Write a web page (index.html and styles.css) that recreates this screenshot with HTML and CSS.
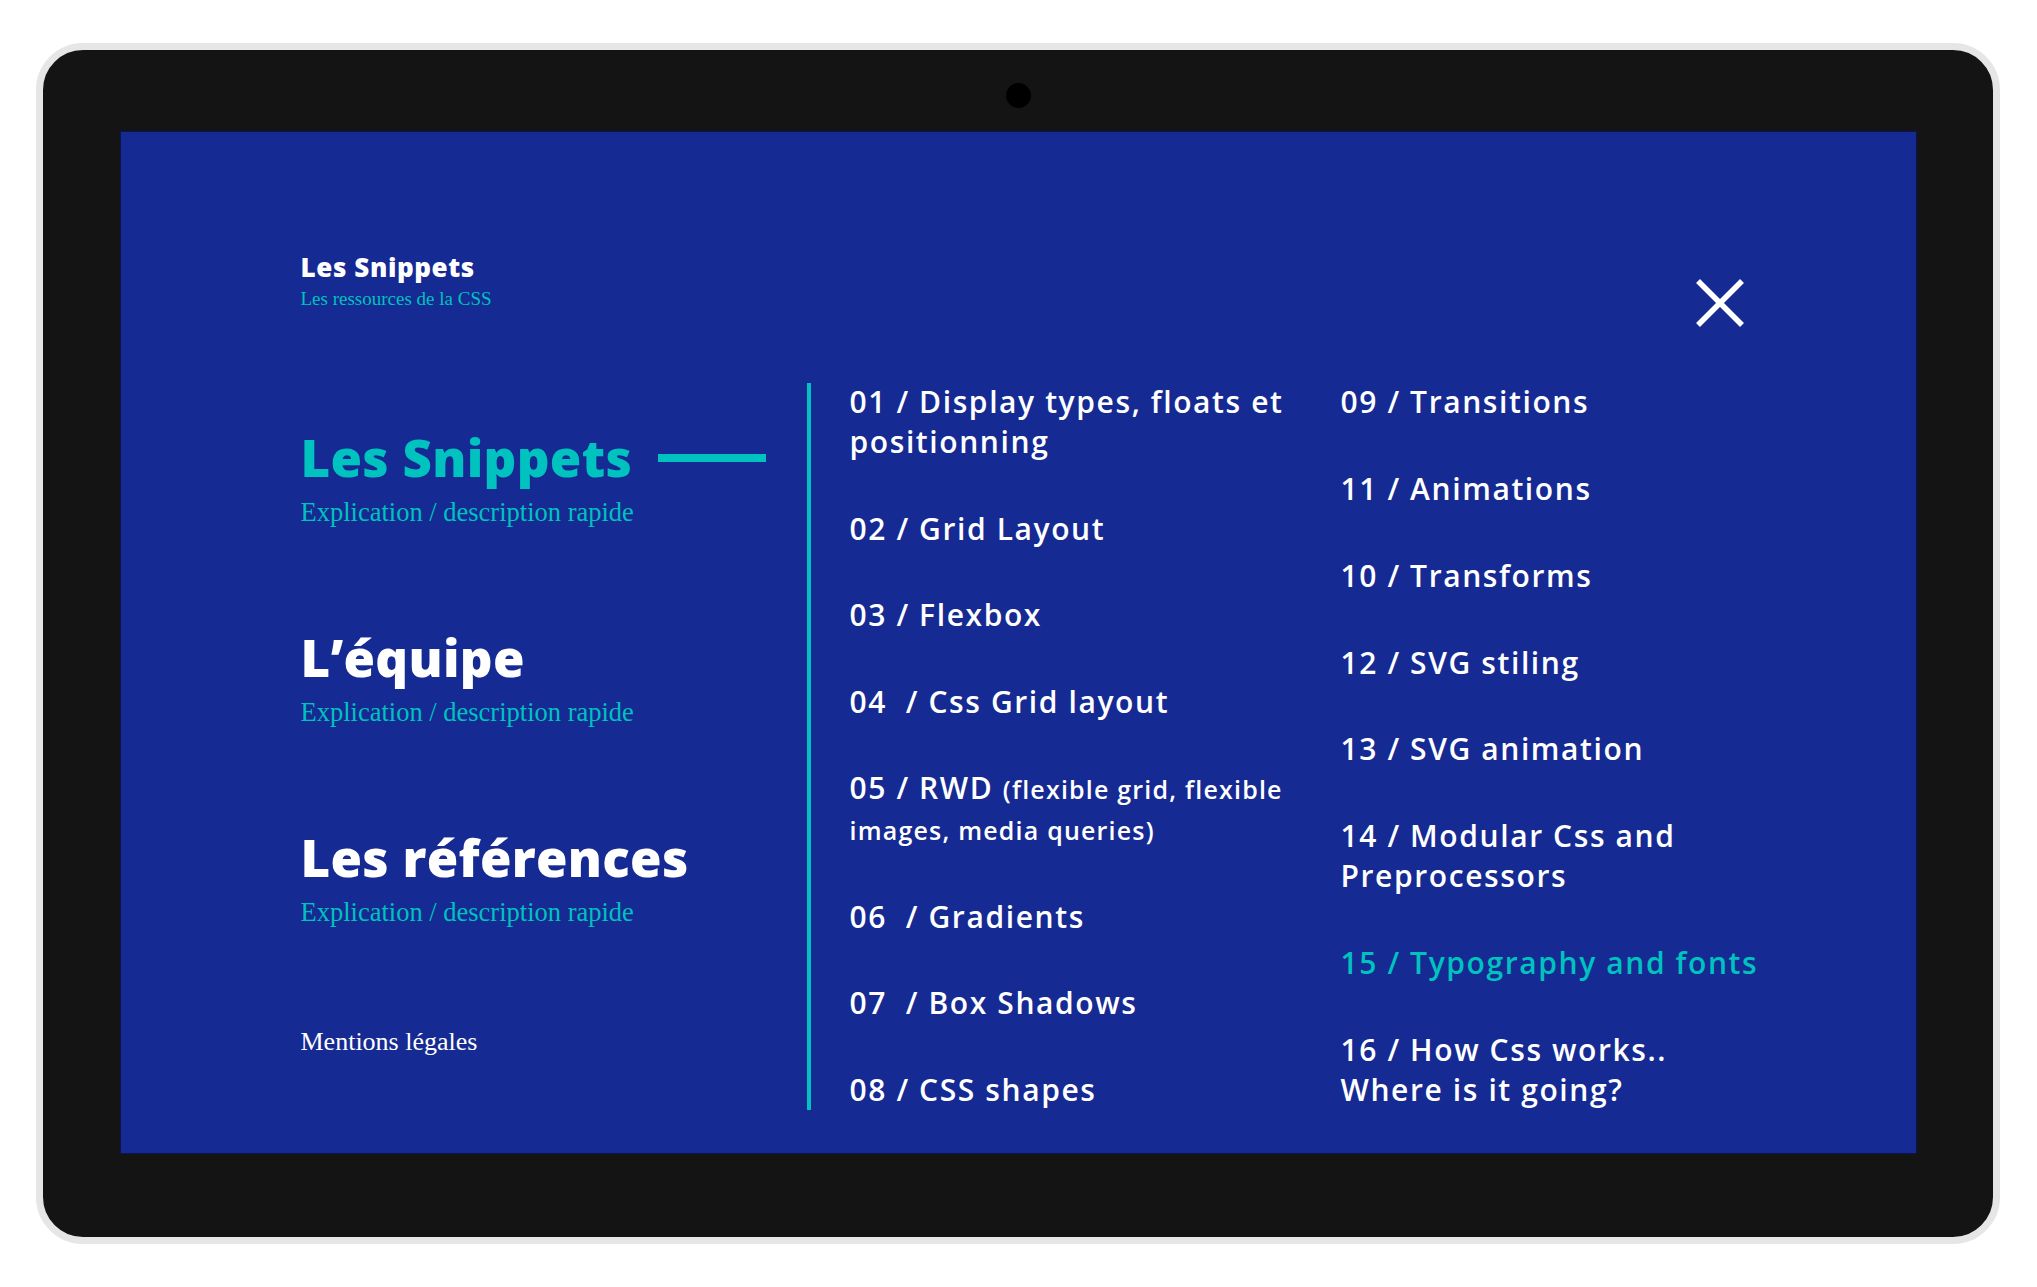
FILE: index.html
```html
<!DOCTYPE html>
<html lang="fr">

<head>
    <meta charset="UTF-8" />
    <meta name="viewport" content="width=device-width, initial-scale=1.0" />
    <title>Les Snippets - Menu</title>
    <link rel="stylesheet" href="styles.css">
</head>

<body>
    <div class="device">
        <div class="bezel">
            <span class="camera"></span>

            <div class="screen">
                <!-- Top bar -->
                <header class="top">
                    <div class="brand">
                        <div class="brand-name">Les Snippets</div>
                        <div class="brand-sub">Les ressources de la CSS</div>
                    </div>
                    <button class="close" aria-label="Fermer">
                        <svg width="50" height="50" viewBox="0 0 50 50">
                            <line x1="3" y1="3" x2="47" y2="47" />
                            <line x1="47" y1="3" x2="3" y2="47" />
                        </svg>
                    </button>
                </header>

                <!-- Menu -->
                <main class="menu">
                    <nav class="sections">
                        <a class="section active">
                            <span class="section-title">Les Snippets <span class="dash"></span></span>
                            <span class="section-desc">Explication / description rapide</span>
                        </a>
                        <a class="section">
                            <span class="section-title">L’équipe</span>
                            <span class="section-desc">Explication / description rapide</span>
                        </a>
                        <a class="section">
                            <span class="section-title">Les références</span>
                            <span class="section-desc">Explication / description rapide</span>
                        </a>
                        <a class="legal">Mentions légales</a>
                    </nav>

                    <div class="divider"></div>

                    <ul class="topics first">
                        <li>01 / Display types, floats et<br>positionning</li>
                        <li>02 / Grid Layout</li>
                        <li>03 / Flexbox</li>
                        <li>04 &nbsp;/ Css Grid layout</li>
                        <li>05 / RWD <small>(flexible grid, flexible</small><br><small>images, media queries)</small></li>
                        <li>06 &nbsp;/ Gradients</li>
                        <li>07 &nbsp;/ Box Shadows</li>
                        <li>08 / CSS shapes</li>
                    </ul>

                    <ul class="topics">
                        <li>09 / Transitions</li>
                        <li>11 / Animations</li>
                        <li>10 / Transforms</li>
                        <li>12 / SVG stiling</li>
                        <li>13 / SVG animation</li>
                        <li>14 / Modular Css and<br>Preprocessors</li>
                        <li class="current">15 / Typography and fonts</li>
                        <li>16 / How Css works..<br>Where is it going?</li>
                    </ul>
                </main>
            </div>
        </div>
    </div>
</body>

</html>
```

FILE: styles.css
```css
* {
    box-sizing: border-box;
}

body {
    margin: 0;
    background: white;
    font-family: "Open Sans", Arial, sans-serif;
}

/* Device frame */
.device {
    margin: 43px 0 0 36px;
    width: 1964px;
}

.bezel {
    background: #141414;
    border: 7px solid #e6e6e6;
    border-radius: 47px;
    padding: 33px 0 83px;
    display: flex;
    flex-direction: column;
    align-items: center;
}

.camera {
    width: 25px;
    height: 25px;
    border-radius: 50%;
    background: #000;
    margin-bottom: 23px;
}

.screen {
    width: 1797px;
    height: 1023px;
    background: #162a93;
    border: 1px solid #0b1450;
    padding: 120px 171px 0 180px;
    color: white;
}

/* Top bar */
.top {
    display: flex;
    justify-content: space-between;
    align-items: flex-start;
}

.brand-name {
    font-size: 26px;
    font-weight: 800;
    line-height: 30px;
    letter-spacing: 0.6px;
}

.brand-sub {
    font-family: "Liberation Serif", serif;
    font-size: 19px;
    line-height: 23px;
    color: #00c2be;
    margin-top: 5px;
}

.close {
    background: none;
    border: none;
    padding: 0;
    margin-top: 26px;
    cursor: pointer;
}

.close svg {
    display: block;
}

.close line {
    stroke: white;
    stroke-width: 5.5;
}

/* Menu */
.menu {
    display: grid;
    grid-template-columns: 506px 4px 530px 1fr;
    height: 727px;
    margin-top: 55px;
}

.sections {
    display: flex;
    flex-direction: column;
    padding: 44px 0 53px;
}

.section {
    display: flex;
    flex-direction: column;
    margin-bottom: 99px;
    cursor: pointer;
}

.section-title {
    display: flex;
    align-items: center;
    gap: 26px;
    font-size: 51px;
    font-weight: 800;
    line-height: 61px;
    letter-spacing: 0.3px;
}

.section.active .section-title {
    color: #00c2be;
}

.dash {
    width: 108px;
    height: 8px;
    background: #00c2be;
}

.section-desc {
    font-family: "Liberation Serif", serif;
    font-size: 26.5px;
    line-height: 31px;
    color: #00c2be;
    margin-top: 9px;
}

.legal {
    margin-top: auto;
    font-family: "Liberation Serif", serif;
    font-size: 26px;
    line-height: 30px;
    cursor: pointer;
}

.divider {
    background: #00c2be;
}

.topics {
    list-style: none;
    margin: -1px 0 0;
    padding: 0;
    display: flex;
    flex-direction: column;
    justify-content: space-between;
    font-size: 30px;
    font-weight: 600;
    line-height: 40px;
    letter-spacing: 1.6px;
    white-space: nowrap;
}

.topics.first {
    padding-left: 39px;
}

.topics small {
    font-size: 25px;
    letter-spacing: 1.2px;
}

.topics li {
    cursor: pointer;
}

.topics .current {
    color: #00c2be;
}
```
